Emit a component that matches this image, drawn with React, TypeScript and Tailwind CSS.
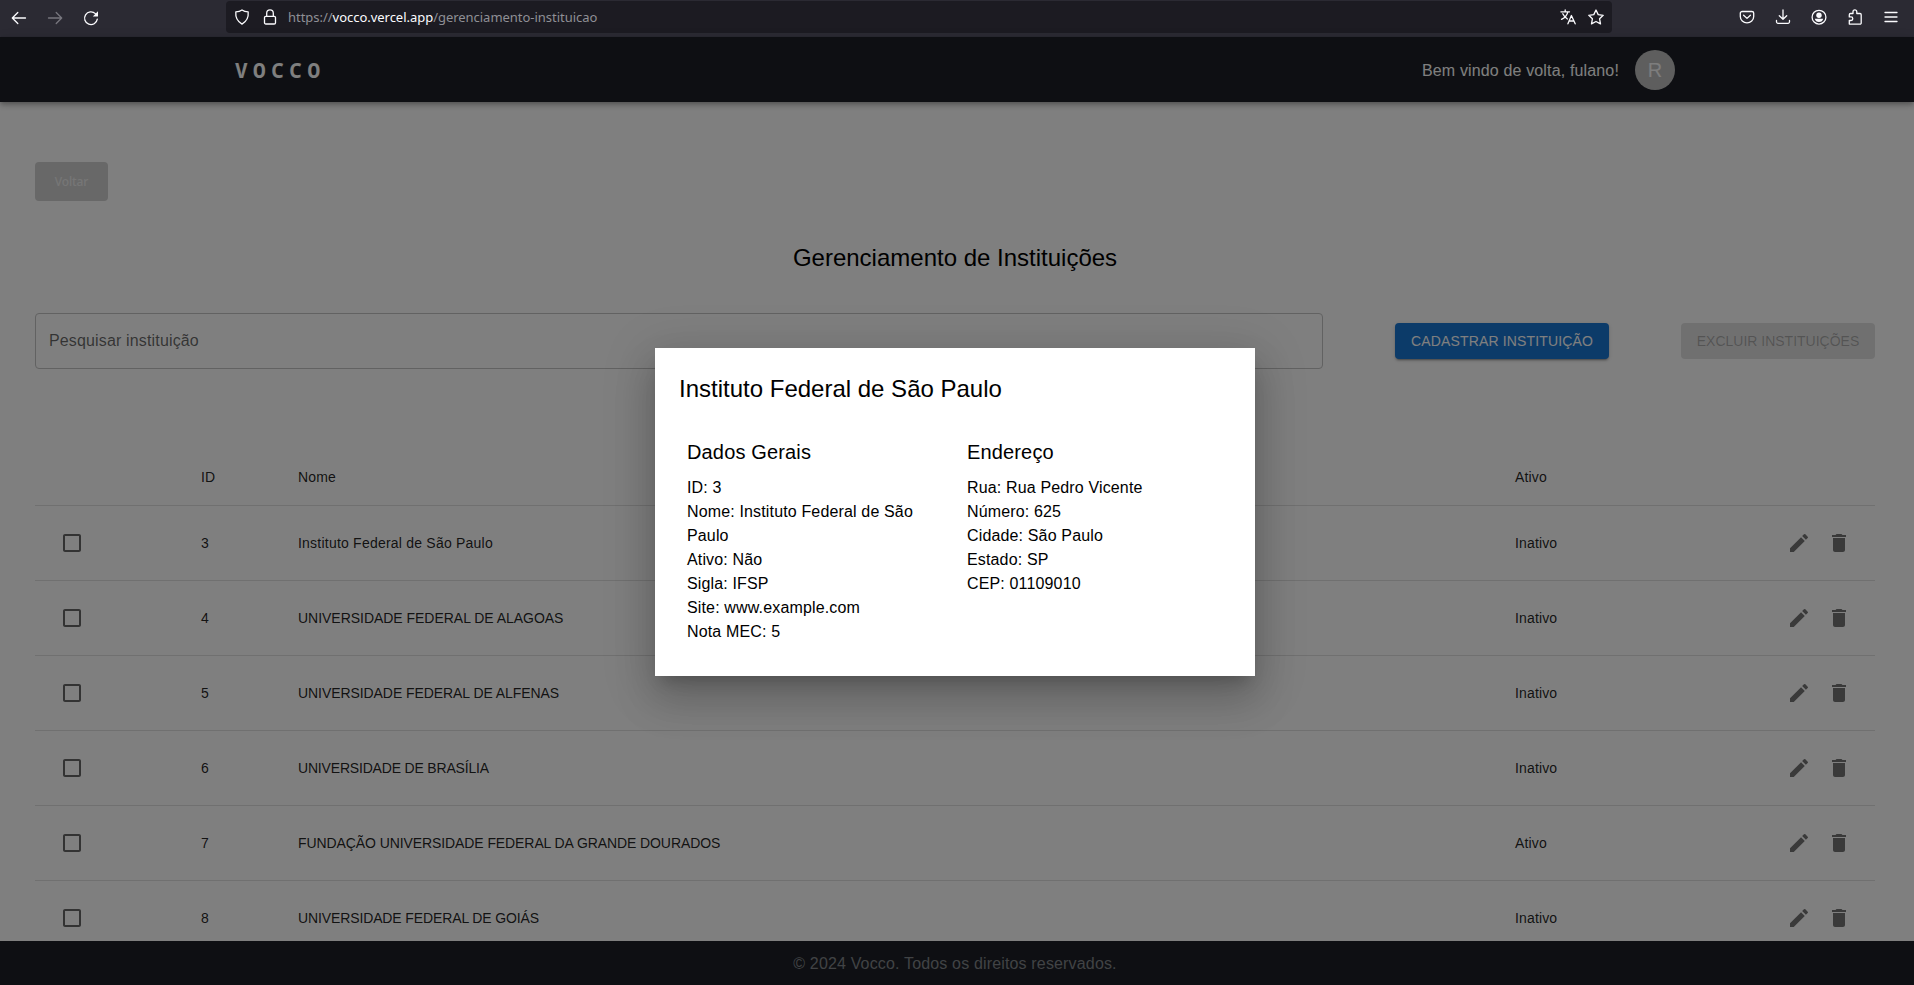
import React from "react";
import { MdEdit, MdDelete, MdCheckBoxOutlineBlank } from "react-icons/md";

const rows = [
  { id: 3, name: "Instituto Federal de São Paulo", status: "Inativo", tracking: "tracking-[0.22px]" },
  { id: 4, name: "UNIVERSIDADE FEDERAL DE ALAGOAS", status: "Inativo", tracking: "tracking-[-0.03px]" },
  { id: 5, name: "UNIVERSIDADE FEDERAL DE ALFENAS", status: "Inativo", tracking: "tracking-[-0.07px]" },
  { id: 6, name: "UNIVERSIDADE DE BRASÍLIA", status: "Inativo", tracking: "tracking-[-0.18px]" },
  { id: 7, name: "FUNDAÇÃO UNIVERSIDADE FEDERAL DA GRANDE DOURADOS", status: "Ativo", tracking: "tracking-[-0.09px]" },
  { id: 8, name: "UNIVERSIDADE FEDERAL DE GOIÁS", status: "Inativo", tracking: "tracking-[-0.12px]" },
];

const general = [
  "ID: 3",
  "Nome: Instituto Federal de São Paulo",
  "Ativo: Não",
  "Sigla: IFSP",
  "Site: www.example.com",
  "Nota MEC: 5",
];

const address = [
  "Rua: Rua Pedro Vicente",
  "Número: 625",
  "Cidade: São Paulo",
  "Estado: SP",
  "CEP: 01109010",
];

function Icon({ children, className = "" }: { children: React.ReactNode; className?: string }) {
  return (
    <svg
      viewBox="0 0 16 16"
      className={"size-4 shrink-0 " + className}
      fill="none"
      stroke="currentColor"
      strokeWidth="1.3"
      strokeLinecap="round"
      strokeLinejoin="round"
    >
      {children}
    </svg>
  );
}

function BrowserBar() {
  return (
    <div className="flex h-[37px] shrink-0 items-center bg-[#2b2a33] text-[#fbfbfe]">
      <div className="flex w-[226px] items-center gap-5 pb-0.5 pl-[11px]">
        <Icon>
          <path d="M14.5 8H1.5M6.800 2.500L1.300 8l5.500 5.500" />
        </Icon>
        <Icon className="text-[#77767e]">
          <path d="M1.500 8h13M9.200 2.500L14.700 8l-5.500 5.500" />
        </Icon>
        <Icon>
          <path d="M14.300 9.200A6.400 6.400 0 1 1 12.400 3.600" />
          <path d="M15 1.300v5.200H9.800z" fill="currentColor" stroke="none" />
        </Icon>
      </div>
      <div className="mb-1 flex h-8 w-[1386px] items-center rounded bg-[#1c1b22] pr-[8px] pl-[8px]">
        <Icon>
          <path d="M8 .9C6.600 2 4.500 2.800 1.800 2.900c-.4 4.600.9 9.200 6.200 12.200 5.300-3 6.600-7.600 6.200-12.200C11.500 2.800 9.400 2 8 .9z" />
        </Icon>
        <Icon className="ml-3">
          <rect x="2.500" y="7.300" width="11" height="7.700" rx="1.300" />
          <path d="M4.700 7.300V4.200a3.300 3.300 0 0 1 6.600 0v3.100" />
        </Icon>
        <div className="mt-[3px] ml-[10px] flex-1 font-['Noto_Sans',sans-serif] text-[13px] tracking-[-0.03px] text-[#8f8f95]">
          https://<span className="text-[#fbfbfe]">vocco.vercel.app</span>/gerenciamento-instituicao
        </div>
        <Icon>
          <path d="M.9 2.800h8.600M5.200 1v1.800M7.800 2.800C7.200 6 4.500 8.800 1.500 10.300M2.800 4.800c1 2.200 2.600 3.900 4.600 5.200" />
          <path d="M7.900 14.800l3.500-8.300 3.800 8.300M9 12h4.900" />
        </Icon>
        <Icon className="ml-3">
          <path d="M8 1l2.200 4.600 5 .7-3.600 3.500.9 5.100L8 12.500l-4.500 2.400.9-5.100L.8 6.300l5-.7z" />
        </Icon>
      </div>
      <div className="flex flex-1 items-center justify-end gap-5 pr-[15px] pb-[3px]">
        <Icon>
          <path d="M3.200 2.500h9.600a1.900 1.500 0 0 1 1.900 1.500v3.600a6.700 6.300 0 0 1-13.400 0V4a1.900 1.500 0 0 1 1.900-1.500z" />
          <path d="M4.600 6.200L8 9.400l3.400-3.200" />
        </Icon>
        <Icon>
          <path d="M8 .9v9.300M4.300 6.700L8 10.300l3.700-3.600M1.500 11.500v1.300a1.500 1.500 0 0 0 1.500 1.500h10a1.500 1.500 0 0 0 1.500-1.500v-1.300" />
        </Icon>
        <Icon>
          <circle cx="8" cy="8.200" r="6.900" />
          <circle cx="8" cy="6.200" r="2.700" fill="currentColor" stroke="none" />
          <path d="M3.800 9.800h8.400c-.3 2-2 3.300-4.200 3.300s-3.900-1.300-4.200-3.300z" fill="currentColor" stroke="none" />
        </Icon>
        <Icon>
          <path d="M2.300 15.100h10.700a1.200 1.200 0 0 0 1.200-1.200V5.700a1.200 1.200 0 0 0-1.200-1.200H9.800V2.700a1.900 1.900 0 0 0-3.800 0v1.800H3.500a1.200 1.200 0 0 0-1.200 1.200v2.200h1.700a1.800 1.800 0 0 1 0 3.600H2.300z" />
        </Icon>
        <Icon>
          <path d="M2 3.500h12M2 8h12M2 12.500h12" />
        </Icon>
      </div>
    </div>
  );
}

function Header() {
  return (
    <header className="z-10 flex h-[65px] shrink-0 items-center justify-between bg-[#1c1f26] pr-[239px] pl-[235px] text-white shadow-[0_2px_4px_-1px_rgba(0,0,0,0.2),0_4px_5px_rgba(0,0,0,0.14),0_1px_10px_rgba(0,0,0,0.12)]">
      <div className="pt-px font-['Noto_Sans_Mono','DejaVu_Sans_Mono',monospace] text-[21px] leading-8 font-bold tracking-[5.5px]">VOCCO</div>
      <div className="flex items-center gap-4">
        <span className="pt-0.5 tracking-[0.15px]">Bem vindo de volta, fulano!</span>
        <div className="flex size-10 items-center justify-center rounded-full bg-[#bdbdbd] text-xl text-[#fafafa]">R</div>
      </div>
    </header>
  );
}

function InstitutionTable() {
  return (
    <div className="mt-[80px] text-sm tracking-[0.15px] text-black/87">
      <div className="flex h-[57px] items-center border-b border-[#e0e0e0]">
        <div className="w-[166px]" />
        <div className="w-[97px]">ID</div>
        <div className="w-[1217px]">Nome</div>
        <div>Ativo</div>
      </div>
      {rows.map((r) => (
        <div key={r.id} className="flex h-[75px] items-center border-b border-[#e0e0e0]">
          <div className="w-[166px] pl-[25px] text-black/60">
            <MdCheckBoxOutlineBlank size={24} />
          </div>
          <div className="w-[97px]">{r.id}</div>
          <div className={"w-[1217px] " + r.tracking}>{r.name}</div>
          <div className="flex-1">{r.status}</div>
          <div className="flex gap-4 pr-6 text-black/54">
            <MdEdit size={24} />
            <MdDelete size={24} />
          </div>
        </div>
      ))}
    </div>
  );
}

function Details({ title, lines, className }: { title: string; lines: string[]; className: string }) {
  return (
    <div className={className}>
      <h3 className="mb-2 text-xl leading-8">{title}</h3>
      {lines.map((l) => (
        <p key={l} className="leading-6">{l}</p>
      ))}
    </div>
  );
}

export default function App() {
  return (
    <div className="flex h-[985px] w-[1914px] flex-col overflow-hidden bg-white font-['Liberation_Sans',Arial,sans-serif] text-base">
      <BrowserBar />
      <div className="relative flex min-h-0 flex-1 flex-col">
        <Header />
        <main className="min-h-0 flex-1 overflow-hidden pt-[60px] pr-[39px] pl-[35px]">
          <button className="flex h-[39px] w-[73px] items-center justify-center rounded bg-[#d0d0d0] font-['Noto_Sans',sans-serif] text-xs font-medium tracking-[-0.1px] text-[#ededed]">
            Voltar
          </button>
          <h1 className="mt-[41px] text-center text-2xl leading-8">Gerenciamento de Instituições</h1>
          <div className="mt-[39px] flex items-center">
            <div className="flex h-14 w-[1288px] items-center rounded border border-[#c4c4c4] px-[13px] tracking-[0.15px] text-black/60">
              Pesquisar instituição
            </div>
            <button className="ml-[72px] flex h-9 w-[214px] items-center justify-center rounded bg-[#1976d2] text-sm tracking-[0.14px] text-white shadow-[0_3px_1px_-2px_rgba(0,0,0,0.2),0_2px_2px_rgba(0,0,0,0.14),0_1px_5px_rgba(0,0,0,0.12)]">
              CADASTRAR INSTITUIÇÃO
            </button>
            <button className="ml-[72px] flex h-9 w-[194px] items-center justify-center rounded bg-black/12 text-sm text-black/26">
              EXCLUIR INSTITUIÇÕES
            </button>
          </div>
          <InstitutionTable />
        </main>
        <footer className="flex h-11 shrink-0 items-center justify-center bg-[#1c1f26] pt-0.5 pr-1 tracking-[0.16px] text-[#82868a]">
          © 2024 Vocco. Todos os direitos reservados.
        </footer>
        <div className="absolute inset-0 z-20 bg-black/50">
          <div
            role="dialog"
            className="absolute top-[311px] left-[655px] h-[328px] w-[600px] bg-white p-6 text-black shadow-[0_11px_15px_-7px_rgba(0,0,0,0.2),0_24px_38px_3px_rgba(0,0,0,0.14),0_9px_46px_8px_rgba(0,0,0,0.12)]"
          >
            <h2 className="pt-px text-2xl leading-8">Instituto Federal de São Paulo</h2>
            <div className="mt-[31px] flex pl-2 tracking-[0.15px]">
              <Details title="Dados Gerais" lines={general} className="w-[280px] pr-10" />
              <Details title="Endereço" lines={address} className="flex-1" />
            </div>
          </div>
        </div>
      </div>
    </div>
  );
}
